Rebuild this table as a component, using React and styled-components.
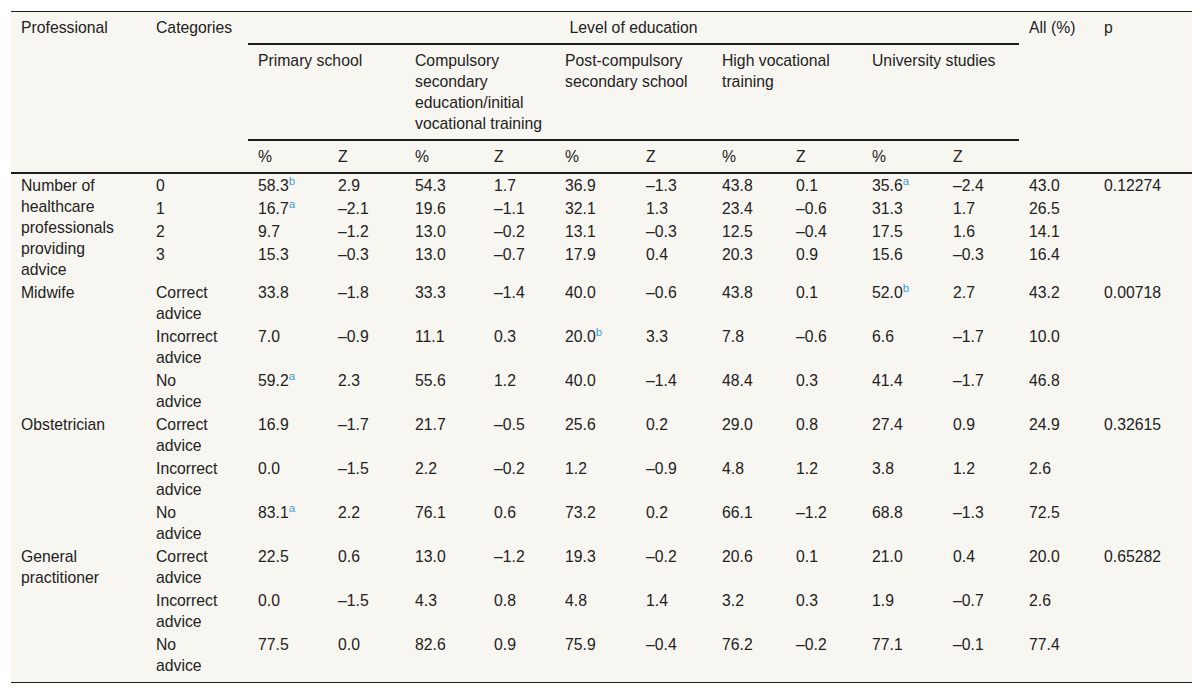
import React from "react";
import styled, { createGlobalStyle } from "styled-components";

const GlobalStyle = createGlobalStyle`
  html, body { margin: 0; padding: 0; background: #ffffff; }
`;

const Page = styled.div`
  padding: 11px 0 0 11px;
`;

const Table = styled.table`
  border-collapse: separate;
  border-spacing: 0;
  table-layout: fixed;
  width: 1181px;
  background: #f8f6f0;
  border-top: 1px solid #1e1e1e;
  border-bottom: 1px solid #1e1e1e;
  font-family: "Liberation Sans", Arial, sans-serif;
  font-size: 15.75px;
  line-height: 21px;
  color: #222222;
`;

const HeadCell = styled.th`
  font-weight: normal;
  text-align: ${(p) => (p.$center ? "center" : "left")};
  vertical-align: top;
  padding: 5px 10px;
  white-space: ${(p) => (p.$nowrap ? "nowrap" : "normal")};
  border-bottom: ${(p) => (p.$rule ? "2px solid #1e1e1e" : "none")};
`;

const Body = styled.tbody`
  tr:last-child td {
    padding-bottom: 6px;
  }
`;

const Row = styled.tr`
  height: ${(p) => (p.$fixed ? "23px" : "auto")};
`;

const Cell = styled.td`
  vertical-align: top;
  padding: 1px ${(p) => (p.$narrow ? "28px" : p.$wide ? "20px" : "10px")} 1px 10px;
`;

const Sup = styled.sup`
  color: #3a9fdc;
  font-size: 11.5px;
  line-height: 0;
  vertical-align: 6px;
`;

const widths = [135, 102, 80, 77, 79, 71, 81, 76, 74, 76, 81, 76, 75, 98];

const levels = [
  "Primary school",
  "Compulsory secondary education/initial vocational training",
  "Post-compulsory secondary school",
  "High vocational training",
  "University studies",
];

const groups = [
  {
    name: "Number of healthcare professionals providing advice",
    single: true,
    rows: [
      { cat: "0", v: ["58.3^b", "2.9", "54.3", "1.7", "36.9", "–1.3", "43.8", "0.1", "35.6^a", "–2.4"], all: "43.0", p: "0.12274" },
      { cat: "1", v: ["16.7^a", "–2.1", "19.6", "–1.1", "32.1", "1.3", "23.4", "–0.6", "31.3", "1.7"], all: "26.5" },
      { cat: "2", v: ["9.7", "–1.2", "13.0", "–0.2", "13.1", "–0.3", "12.5", "–0.4", "17.5", "1.6"], all: "14.1" },
      { cat: "3", v: ["15.3", "–0.3", "13.0", "–0.7", "17.9", "0.4", "20.3", "0.9", "15.6", "–0.3"], all: "16.4" },
    ],
  },
  {
    name: "Midwife",
    rows: [
      { cat: "Correct advice", v: ["33.8", "–1.8", "33.3", "–1.4", "40.0", "–0.6", "43.8", "0.1", "52.0^b", "2.7"], all: "43.2", p: "0.00718" },
      { cat: "Incorrect advice", v: ["7.0", "–0.9", "11.1", "0.3", "20.0^b", "3.3", "7.8", "–0.6", "6.6", "–1.7"], all: "10.0" },
      { cat: "No advice", v: ["59.2^a", "2.3", "55.6", "1.2", "40.0", "–1.4", "48.4", "0.3", "41.4", "–1.7"], all: "46.8" },
    ],
  },
  {
    name: "Obstetrician",
    rows: [
      { cat: "Correct advice", v: ["16.9", "–1.7", "21.7", "–0.5", "25.6", "0.2", "29.0", "0.8", "27.4", "0.9"], all: "24.9", p: "0.32615" },
      { cat: "Incorrect advice", v: ["0.0", "–1.5", "2.2", "–0.2", "1.2", "–0.9", "4.8", "1.2", "3.8", "1.2"], all: "2.6" },
      { cat: "No advice", v: ["83.1^a", "2.2", "76.1", "0.6", "73.2", "0.2", "66.1", "–1.2", "68.8", "–1.3"], all: "72.5" },
    ],
  },
  {
    name: "General practitioner",
    rows: [
      { cat: "Correct advice", v: ["22.5", "0.6", "13.0", "–1.2", "19.3", "–0.2", "20.6", "0.1", "21.0", "0.4"], all: "20.0", p: "0.65282" },
      { cat: "Incorrect advice", v: ["0.0", "–1.5", "4.3", "0.8", "4.8", "1.4", "3.2", "0.3", "1.9", "–0.7"], all: "2.6" },
      { cat: "No advice", v: ["77.5", "0.0", "82.6", "0.9", "75.9", "–0.4", "76.2", "–0.2", "77.1", "–0.1"], all: "77.4" },
    ],
  },
];

function Value({ text }) {
  const [num, mark] = text.split("^");
  return (
    <>
      {num}
      {mark && <Sup>{mark}</Sup>}
    </>
  );
}

export default function App() {
  return (
    <Page>
      <GlobalStyle />
      <Table>
        <colgroup>
          {widths.map((w, i) => (
            <col key={i} style={{ width: w }} />
          ))}
        </colgroup>
        <thead>
          <tr>
            <HeadCell rowSpan={3} $rule>Professional</HeadCell>
            <HeadCell rowSpan={3} $rule $nowrap>Categories</HeadCell>
            <HeadCell colSpan={10} $center $rule>Level of education</HeadCell>
            <HeadCell rowSpan={3} $rule $nowrap>All (%)</HeadCell>
            <HeadCell rowSpan={3} $rule>p</HeadCell>
          </tr>
          <tr>
            {levels.map((l) => (
              <HeadCell key={l} colSpan={2} $rule>{l}</HeadCell>
            ))}
          </tr>
          <tr>
            {levels.map((l) => (
              <React.Fragment key={l}>
                <HeadCell $rule>%</HeadCell>
                <HeadCell $rule>Z</HeadCell>
              </React.Fragment>
            ))}
          </tr>
        </thead>
        <Body>
          {groups.map((g) =>
            g.rows.map((r, i) => (
              <Row key={g.name + i} $fixed={g.single && i < g.rows.length - 1}>
                {i === 0 && (
                  <Cell rowSpan={g.rows.length} $wide>{g.name}</Cell>
                )}
                <Cell $narrow>{r.cat}</Cell>
                {r.v.map((v, j) => (
                  <Cell key={j}><Value text={v} /></Cell>
                ))}
                <Cell>{r.all}</Cell>
                <Cell>{r.p || ""}</Cell>
              </Row>
            ))
          )}
        </Body>
      </Table>
    </Page>
  );
}
